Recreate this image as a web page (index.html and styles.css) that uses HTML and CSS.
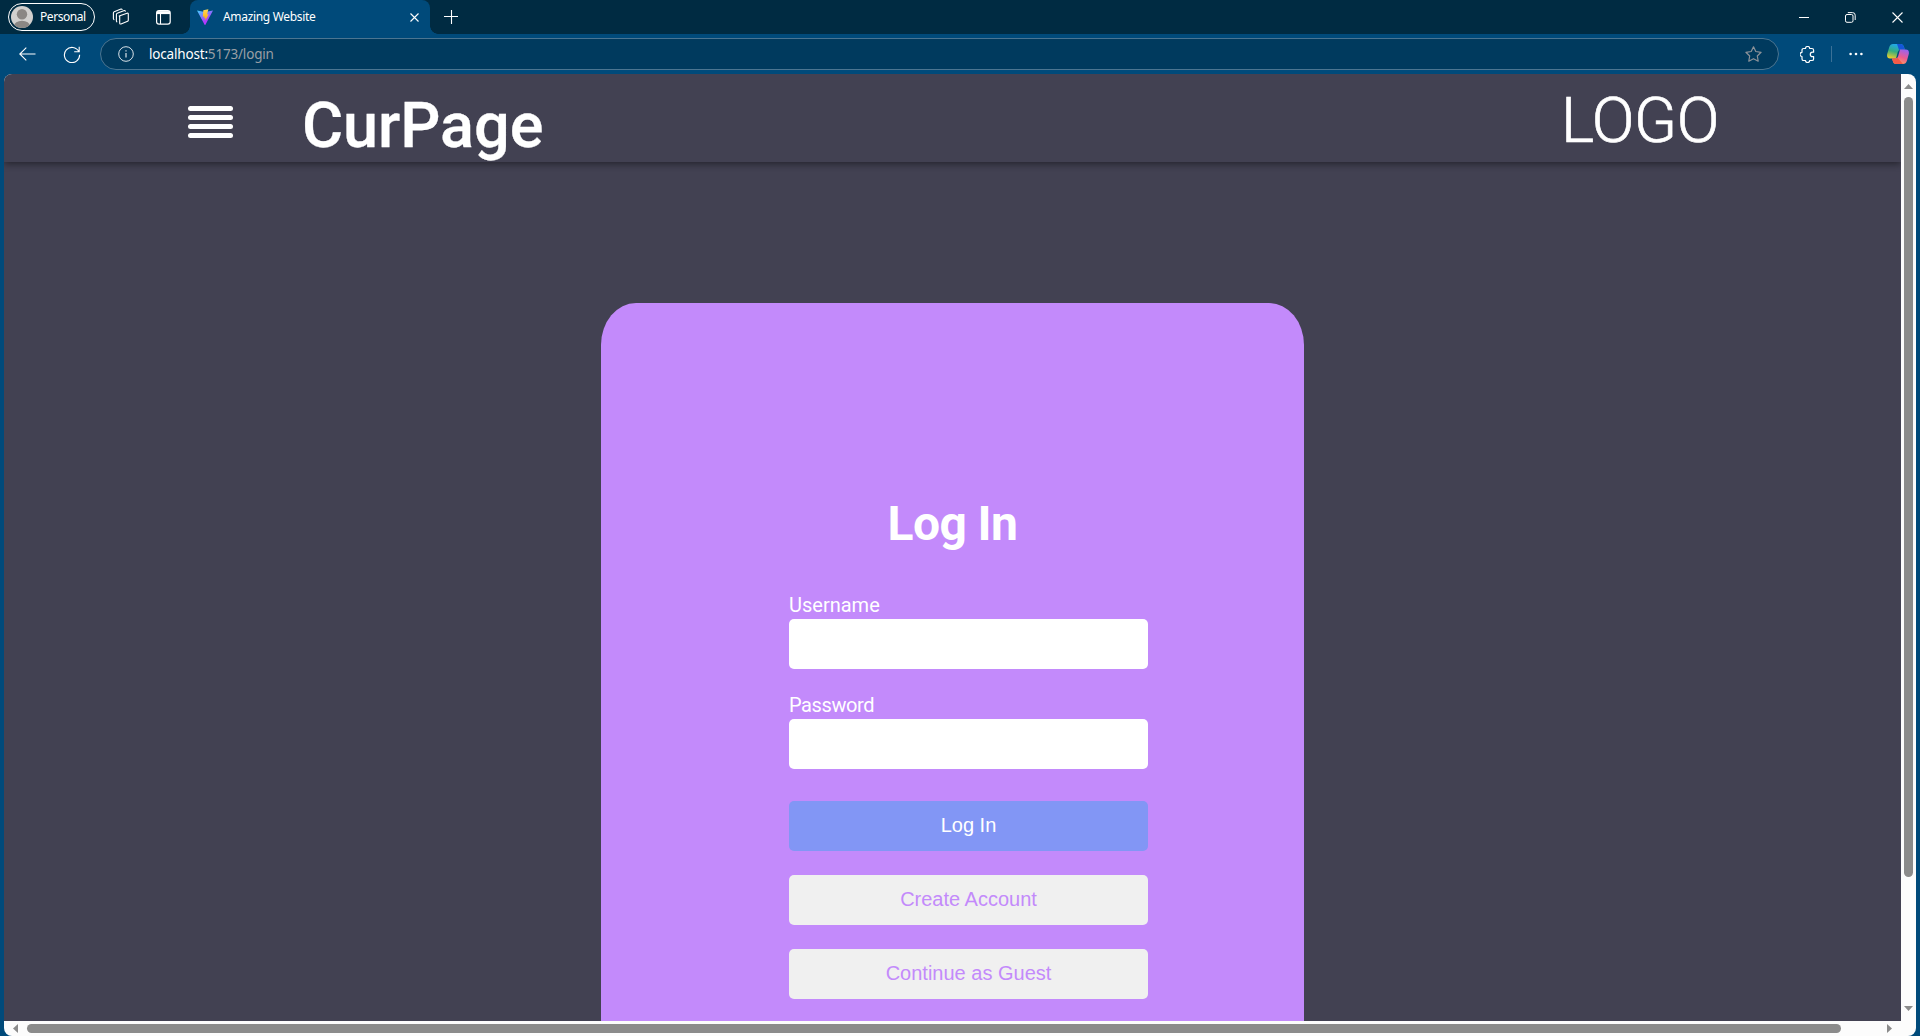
FILE: index.html
```html
<!DOCTYPE html>
<html lang="en">
<head>
<meta charset="utf-8">
<title>Amazing Website</title>
<link rel="stylesheet" href="styles.css">
</head>
<body>
<div class="browser">
  <div class="tabstrip">
    <div class="profile">
      <svg class="avatar" width="22" height="22" viewBox="0 0 22 22"><defs><clipPath id="face"><circle cx="11" cy="11" r="11"/></clipPath></defs><g clip-path="url(#face)"><rect width="22" height="22" fill="#d2d0ce"/><circle cx="11" cy="8.3" r="5.2" fill="#8b8784"/><ellipse cx="11" cy="20" rx="8" ry="5.2" fill="#8b8784"/></g></svg>
      <span>Personal</span>
    </div>
    <svg class="workspaces" width="18" height="18" viewBox="0 0 18 18" fill="none" stroke="#fff" stroke-width="1.1" stroke-linejoin="round" stroke-linecap="round"><path d="M7.2 8.1 15 5.2q1.300-.4 1.300.8v6.200q0 .7-.7 1l-6.600 2.700q-1.300.5-1.300-.8V8.200"/><path d="M4.800 13.800q-.4-.3-.4-1V6.400q0-.9.8-1.200L12.300 2.600q.8-.2 1 .5"/><path d="M1.900 11.600q-.5-.3-.5-1V4.900q0-.9.800-1.200L9 1.100q.8-.2 1.100.4"/></svg>
    <svg class="vertical-tabs" width="15" height="15" viewBox="0 0 15 15" fill="none" stroke="#fff"><rect x=".6" y=".6" width="13.600" height="13.600" rx="2.400" stroke-width="1.200"/><path d="M1 2.600h13" stroke-width="3"/><path d="M4.500 3v11" stroke-width="1.100"/></svg>
    <div class="tab">
      <svg width="16" height="16" viewBox="0 0 16 16"><defs><linearGradient id="vite" x1="0" y1="0" x2=".65" y2="1"><stop offset="0" stop-color="#41d1ff"/><stop offset=".75" stop-color="#b13cfe"/><stop offset="1" stop-color="#bd34fe"/></linearGradient><linearGradient id="bolt" x1="0" y1="0" x2="0" y2="1"><stop offset="0" stop-color="#ffd95a"/><stop offset="1" stop-color="#ffa800"/></linearGradient></defs><path d="M0 1.600 8 3l8-1.400L8.400 15.700q-.4.600-.8 0Z" fill="url(#vite)"/><path d="M11.400.2 6.300 1.200 5.800 7.700 7.600 7.400 7.200 9.500 8.600 9.100 8.200 11.700 11.700 5.300 10 5.500Z" fill="url(#bolt)"/></svg>
      <span class="tab-title">Amazing Website</span>
      <svg width="9" height="9" viewBox="0 0 9 9"><path d="m.5.5 8 8m0-8-8 8" stroke="#fff" stroke-width="1.100"/></svg>
    </div>
    <svg class="new-tab" width="14" height="14" viewBox="0 0 14 14"><path d="M0 6.500h14M7.500 0v14" stroke="#fff" stroke-width="1.100"/></svg>
    <div class="window-controls">
      <svg width="10" height="11" viewBox="0 0 10 11"><path d="M0 5.500h10" stroke="#fff"/></svg>
      <svg width="11" height="11" viewBox="0 0 11 11" fill="none" stroke="#fff"><rect x=".5" y="2.500" width="7.500" height="7.800" rx="1.500"/><path d="M2.800.6h4.700Q10.200.6 10.200 3.200V8"/></svg>
      <svg width="11" height="11" viewBox="0 0 11 11"><path d="m.5.5 10 10m0-10-10 10" stroke="#fff" stroke-width="1.100"/></svg>
    </div>
  </div>
  <div class="toolbar">
    <svg class="back" width="17" height="14" viewBox="0 0 17 14" fill="none" stroke="#fff" stroke-width="1.100"><path d="M16.500 7H.8M7.300.6.800 7l6.500 6.400"/></svg>
    <svg class="reload" width="18" height="17" viewBox="0 0 18 17" fill="none" stroke="#fff" stroke-width="1.100"><path d="M15.800 5.600A7.600 7.600 0 1 0 16.600 8.700M16.200.8v5h-5"/></svg>
    <div class="address">
      <svg width="16" height="16" viewBox="0 0 16 16" fill="none" stroke="#d9e2e8"><circle cx="8" cy="8" r="7.300"/><path d="M8 7v4.500M8 4.200v1.200" stroke-width="1.200"/></svg>
      <span class="url"><b>localhost:</b>5173/login</span>
      <svg width="17" height="16" viewBox="0 0 17 16" fill="none" stroke="#8c9299" stroke-width="1.200" stroke-linejoin="round"><path d="m8.500.8 2.300 4.700 5.300.8-3.800 3.700.9 5.200-4.700-2.500-4.700 2.500.9-5.200L.9 6.300l5.300-.8Z"/></svg>
    </div>
    <svg class="extensions" width="15" height="17" viewBox="0 0 15 17" fill="none" stroke="#fff" stroke-width="1.200" stroke-linejoin="round"><path d="M3.700 2.500h1.800a2.100 2 0 0 1 4.200 0h2.200q1.700 0 1.700 1.700v2h-1.100a2.200 2.200 0 0 0 0 4.400h1.100v2.300q0 1.600-1.700 1.600H9.700a2.100 2 0 0 1-4.200 0H3.700Q2 14.500 2 12.900v-2.400a2 2.100 0 0 1 0-4.200V4.200q0-1.700 1.700-1.700Z"/></svg>
    <i class="divider"></i>
    <svg class="more" width="14" height="4" viewBox="0 0 14 4" fill="#fff"><circle cx="1.600" cy="2" r="1.300"/><circle cx="7" cy="2" r="1.300"/><circle cx="12.400" cy="2" r="1.300"/></svg>
    <svg class="copilot" width="22" height="20" viewBox="0 0 22 20"><defs><linearGradient id="ca" x1=".5" y1="0" x2=".2" y2="1"><stop offset="0" stop-color="#20a8ef"/><stop offset=".5" stop-color="#34ad7e"/><stop offset="1" stop-color="#f3ce27"/></linearGradient><linearGradient id="cb" x1=".7" y1="0" x2=".3" y2="1"><stop offset="0" stop-color="#9b63ee"/><stop offset=".5" stop-color="#ec5b91"/><stop offset="1" stop-color="#ffa65f"/></linearGradient></defs><path d="M6 0h7.500Q16 0 17 3l.8 2.500h-4Q11.500 5.500 10.800 8L9 14.500H3Q-.6 14.500.2 10L2.300 3Q3.300 0 6 0Z" fill="url(#ca)"/><path d="M10 0h3.500Q16 0 17 3l.8 2.500h-4q-1 0-1.700.8Z" fill="#1555d8"/><path d="M16 20H9Q6.500 20 5.800 17L5 14.500h3.500q2 0 2.700-2.500L13 5.500h5.800Q22.500 5.500 21.800 10L20 16.500Q19 20 16 20Z" fill="url(#cb)"/><path d="M16 20H9Q6.500 20 5.800 17L5 14.500h3.500q1.400 0 2-.8Z" fill="#f35a48"/></svg>
  </div>
  <div class="viewport">
    <main class="page">
      <header class="site-header">
        <div class="menu"><i></i><i></i><i></i><i></i></div>
        <h1 class="page-name">CurPage</h1>
        <div class="logo">LOGO</div>
      </header>
      <section class="card">
        <h2>Log In</h2>
        <form class="login-form">
          <label class="user">Username<input type="text"></label>
          <label class="pass">Password<input type="password"></label>
          <button type="button" class="primary">Log In</button>
          <button type="button">Create Account</button>
          <button type="button">Continue as Guest</button>
        </form>
      </section>
    </main>
    <div class="vscroll">
      <svg width="9" height="5" viewBox="0 0 9 5"><path d="M4.500 0 9 5H0Z" fill="#8b8b8b"/></svg>
      <div class="vtrack"><i></i></div>
      <svg width="9" height="5" viewBox="0 0 9 5"><path d="M0 0h9L4.500 5Z" fill="#8b8b8b"/></svg>
    </div>
    <div class="hscroll">
      <svg width="5" height="9" viewBox="0 0 5 9"><path d="M5 0v9L0 4.500Z" fill="#8b8b8b"/></svg>
      <div class="htrack"><i></i></div>
      <svg width="5" height="9" viewBox="0 0 5 9"><path d="M0 0v9l5-4.500Z" fill="#8b8b8b"/></svg>
    </div>
  </div>
</div>
</body>
</html>
```
FILE: styles.css
```css
* { box-sizing: border-box; }
body { margin: 0; overflow: hidden; font-family: "Open Sans", sans-serif; color: #fff; }
svg { display: block; flex: none; }
.browser { display: flex; flex-direction: column; width: 1920px; height: 1036px; background: #004a7a; }

.tabstrip { display: flex; align-items: center; height: 34px; background: #002b42; }
.profile { display: flex; align-items: center; gap: 7px; width: 87px; height: 28px; margin-left: 8px; padding-left: 2px; border: 1px solid #fff; border-radius: 14px; font: 12px/18px "Noto Sans", sans-serif; letter-spacing: -.45px; }
.workspaces { margin-left: 17px; }
.vertical-tabs { margin-left: 26px; }
.tab { position: relative; display: flex; align-items: center; width: 240px; height: 34px; margin-left: 19px; padding: 0 11px 0 7px; border-radius: 8px 8px 0 0; background: #004a7a; font: 12px/18px "Noto Sans", sans-serif; letter-spacing: -.33px; }
.tab::before, .tab::after { content: ""; position: absolute; bottom: 0; width: 8px; height: 8px; }
.tab::before { left: -8px; background: radial-gradient(circle at 0 0, #002b42 7.500px, #004a7a 8px); }
.tab::after { right: -8px; background: radial-gradient(circle at 100% 0, #002b42 7.500px, #004a7a 8px); }
.tab-title { flex: 1; margin-left: 10px; }
.new-tab { margin-left: 14px; }
.window-controls { display: flex; align-items: center; gap: 36px; margin-left: auto; margin-right: 17px; }

.toolbar { display: flex; align-items: center; height: 40px; }
.back { margin-left: 19px; }
.reload { margin-left: 27px; }
.address { display: flex; align-items: center; width: 1679px; height: 32px; margin-left: 19px; padding: 0 16px 0 17px; border: 1px solid #4b7591; border-radius: 16px; background: #003a5e; }
.url { flex: 1; margin-left: 15px; color: #999fa5; font: 13.500px/20px "Noto Sans", sans-serif; letter-spacing: -.18px; }
.url b { color: #fff; font-weight: 400; }
.extensions { margin-left: 21px; }
.divider { width: 1px; height: 16px; margin-left: 16px; background: #3b7197; }
.more { margin-left: 17px; }
.copilot { margin-left: 24px; }

.viewport { display: grid; grid-template: 947px 15px / 1897px 15px; width: 1912px; margin-left: 4px; overflow: hidden; border-radius: 8px; background: #fcfcfc; }
.page { overflow: hidden; background: #424152; }
.site-header { display: flex; height: 88px; padding-left: 184px; box-shadow: 0 2px 7px rgba(0, 0, 0, .45); }
.menu { display: flex; flex-direction: column; gap: 4px; width: 45px; margin-top: 32px; }
.menu i { height: 5px; border-radius: 2.500px; background: #fff; }
.page-name { width: 260px; margin: 10px 0 0 69px; font: 500 63px/84px Roboto, sans-serif; letter-spacing: -.05px; -webkit-text-stroke: .3px #fff; }
.logo { width: 190px; margin: 5px 0 0 999px; font: 300 63px/84px Roboto, sans-serif; letter-spacing: -.4px; -webkit-text-stroke: .7px #fff; }

.card { display: flex; flex-direction: column; width: 703px; height: 850px; margin: 141px 0 0 597px; border-radius: 35px / 42px; background: #c38afb; }
.card h2 { margin: 191px 0 0; font: 700 48px/60px Roboto, sans-serif; letter-spacing: -.6px; text-align: center; }
.login-form { display: flex; flex-direction: column; width: 359px; margin: 37px 0 0 188px; }
.login-form label { display: flex; flex-direction: column; height: 78px; font: 20px/28px Roboto, sans-serif; }
.login-form input { width: 359px; height: 50px; padding: 0 12px; border: 0; border-radius: 5px; background: #fff; }
.login-form .pass { margin-top: 22px; letter-spacing: -.4px; }
.login-form button { height: 50px; margin-top: 24px; padding: 0 0 3px; border: 0; border-radius: 5px; background: #f0f0f0; color: #c38afb; font: 20px/24px "Liberation Sans", Arial, sans-serif; }
.login-form .primary { margin-top: 32px; background: #8296f5; color: #fff; }

.vscroll { display: flex; flex-direction: column; align-items: center; padding: 10px 0; }
.vtrack { flex: 1; padding-top: 8px; }
.vtrack i { display: block; width: 9px; height: 780px; border-radius: 5px; background: #8b8b8b; }
.hscroll { display: flex; align-items: center; padding: 0 9px; }
.htrack { flex: 1; padding-left: 9px; }
.htrack i { display: block; width: 1814px; height: 9px; border-radius: 5px; background: #8b8b8b; }
```
